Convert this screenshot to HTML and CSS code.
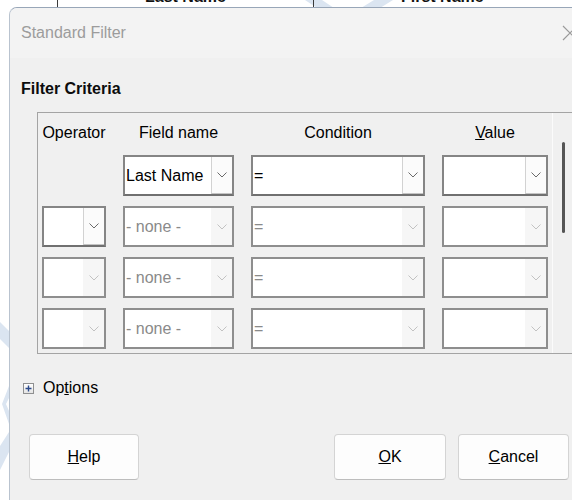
FILE: index.html
```html
<!DOCTYPE html>
<html lang="en">
<head>
<meta charset="utf-8">
<title>Standard Filter</title>
<link rel="stylesheet" href="styles.css">
</head>
<body>
  <svg class="backdrop" width="572" height="500" viewBox="0 0 572 500" aria-hidden="true">
    <polygon points="305,0 322,0 334,8 317,8" />
    <polygon points="374,0 393,0 380,8 361,8" />
    <polygon points="0,322 9,331 9,348 0,339" />
    <polygon points="9,386 2,404 9,424 9,411 6,404 9,398" />
    <polygon points="9,432 0,446 0,470 9,452" />
  </svg>

  <div class="sheet">
    <div class="sheet-cell sheet-first"></div>
    <div class="sheet-cell sheet-wide"><span class="sheet-text">Last Name</span></div>
    <div class="sheet-cell sheet-wide"><span class="sheet-text">First Name</span></div>
  </div>

  <div class="dialog">
    <header class="titlebar">
      <span class="title">Standard Filter</span>
      <svg class="close" width="16" height="16" viewBox="0 0 16 16" aria-hidden="true">
        <path d="M1 1 L15 15 M15 1 L1 15" />
      </svg>
    </header>

    <main class="content">
      <h2 class="section-title">Filter Criteria</h2>

      <div class="criteria">
        <div class="grid">
          <div class="col-head">Operator</div>
          <div class="col-head">Field name</div>
          <div class="col-head">Condition</div>
          <div class="col-head"><u>V</u>alue</div>

          <div class="blank"></div>
          <div class="combo">
            <span class="combo-text">Last Name</span>
            <span class="combo-btn"><svg class="chev" width="10" height="6" viewBox="0 0 10 6"><path d="M0.5 0.5 L5 5 L9.5 0.5" /></svg></span>
          </div>
          <div class="combo">
            <span class="combo-text">=</span>
            <span class="combo-btn"><svg class="chev" width="10" height="6" viewBox="0 0 10 6"><path d="M0.5 0.5 L5 5 L9.5 0.5" /></svg></span>
          </div>
          <div class="combo">
            <span class="combo-text"></span>
            <span class="combo-btn"><svg class="chev" width="10" height="6" viewBox="0 0 10 6"><path d="M0.5 0.5 L5 5 L9.5 0.5" /></svg></span>
          </div>

          <div class="combo">
            <span class="combo-text"></span>
            <span class="combo-btn"><svg class="chev" width="10" height="6" viewBox="0 0 10 6"><path d="M0.5 0.5 L5 5 L9.5 0.5" /></svg></span>
          </div>
          <div class="combo is-disabled">
            <span class="combo-text">- none -</span>
            <span class="combo-btn"><svg class="chev" width="10" height="6" viewBox="0 0 10 6"><path d="M0.5 0.5 L5 5 L9.5 0.5" /></svg></span>
          </div>
          <div class="combo is-disabled">
            <span class="combo-text">=</span>
            <span class="combo-btn"><svg class="chev" width="10" height="6" viewBox="0 0 10 6"><path d="M0.5 0.5 L5 5 L9.5 0.5" /></svg></span>
          </div>
          <div class="combo is-disabled">
            <span class="combo-text"></span>
            <span class="combo-btn"><svg class="chev" width="10" height="6" viewBox="0 0 10 6"><path d="M0.5 0.5 L5 5 L9.5 0.5" /></svg></span>
          </div>

          <div class="combo is-disabled">
            <span class="combo-text"></span>
            <span class="combo-btn"><svg class="chev" width="10" height="6" viewBox="0 0 10 6"><path d="M0.5 0.5 L5 5 L9.5 0.5" /></svg></span>
          </div>
          <div class="combo is-disabled">
            <span class="combo-text">- none -</span>
            <span class="combo-btn"><svg class="chev" width="10" height="6" viewBox="0 0 10 6"><path d="M0.5 0.5 L5 5 L9.5 0.5" /></svg></span>
          </div>
          <div class="combo is-disabled">
            <span class="combo-text">=</span>
            <span class="combo-btn"><svg class="chev" width="10" height="6" viewBox="0 0 10 6"><path d="M0.5 0.5 L5 5 L9.5 0.5" /></svg></span>
          </div>
          <div class="combo is-disabled">
            <span class="combo-text"></span>
            <span class="combo-btn"><svg class="chev" width="10" height="6" viewBox="0 0 10 6"><path d="M0.5 0.5 L5 5 L9.5 0.5" /></svg></span>
          </div>

          <div class="combo is-disabled">
            <span class="combo-text"></span>
            <span class="combo-btn"><svg class="chev" width="10" height="6" viewBox="0 0 10 6"><path d="M0.5 0.5 L5 5 L9.5 0.5" /></svg></span>
          </div>
          <div class="combo is-disabled">
            <span class="combo-text">- none -</span>
            <span class="combo-btn"><svg class="chev" width="10" height="6" viewBox="0 0 10 6"><path d="M0.5 0.5 L5 5 L9.5 0.5" /></svg></span>
          </div>
          <div class="combo is-disabled">
            <span class="combo-text">=</span>
            <span class="combo-btn"><svg class="chev" width="10" height="6" viewBox="0 0 10 6"><path d="M0.5 0.5 L5 5 L9.5 0.5" /></svg></span>
          </div>
          <div class="combo is-disabled">
            <span class="combo-text"></span>
            <span class="combo-btn"><svg class="chev" width="10" height="6" viewBox="0 0 10 6"><path d="M0.5 0.5 L5 5 L9.5 0.5" /></svg></span>
          </div>
        </div>

        <div class="scroll">
          <div class="thumb"></div>
        </div>
      </div>

      <div class="options">
        <span class="expander">
          <svg width="9" height="9" viewBox="0 0 9 9" aria-hidden="true"><path d="M4.5 1.5 V7.5 M1.5 4.5 H7.5" /></svg>
        </span>
        <span>Op<u>t</u>ions</span>
      </div>

      <div class="buttons">
        <button class="btn btn-help" type="button"><u>H</u>elp</button>
        <button class="btn btn-ok" type="button"><u>O</u>K</button>
        <button class="btn btn-cancel" type="button"><u>C</u>ancel</button>
      </div>
    </main>
  </div>
</body>
</html>
```

FILE: styles.css
```css
* {
  box-sizing: border-box;
}

html,
body {
  margin: 0;
}

body {
  position: relative;
  width: 572px;
  height: 500px;
  overflow: hidden;
  background: #ffffff;
  font-family: "Liberation Sans", Arial, sans-serif;
  font-size: 16px;
  color: #000000;
}

/* pale shapes of the document behind the dialog */
.backdrop {
  position: absolute;
  left: 0;
  top: 0;
  z-index: 0;
}

.backdrop polygon {
  fill: #dbe5f1;
}

/* strip of spreadsheet visible above the dialog */
.sheet {
  position: relative;
  z-index: 1;
  display: flex;
  height: 7px;
  overflow: hidden;
}

.sheet-cell {
  height: 7px;
}

.sheet-first {
  width: 57px;
}

.sheet-wide {
  width: 256px;
  border-left: 1px solid #3a3a3a;
  padding-left: 87px;
}

.sheet-text {
  display: block;
  margin-top: -11px;
  font-weight: bold;
  font-size: 16px;
  line-height: 16px;
  color: #111111;
  white-space: nowrap;
}

/* dialog window */
.dialog {
  position: relative;
  z-index: 1;
  margin-left: 9px;
  width: 580px;
  height: 493px;
  background: #f0f0f0;
  border-top: 1px solid #98a6b8;
  border-left: 1px solid #b9c3cf;
  border-top-left-radius: 8px;
  overflow: hidden;
}

.titlebar {
  display: flex;
  align-items: center;
  height: 50px;
  padding: 0 11px 0 11px;
  background: #f3f3f3;
}

.title {
  color: #9c9c9c;
  font-size: 16px;
}

.close {
  margin-left: auto;
}

.close path {
  stroke: #9a9a9a;
  stroke-width: 1.2;
  fill: none;
}

.content {
  padding: 21px 11px 0;
}

.section-title {
  margin: 0;
  font-size: 16px;
  font-weight: bold;
  line-height: 20px;
  color: #0c0c0c;
}

/* criteria frame with its scroll area */
.criteria {
  display: flex;
  width: 560px;
  margin: 13px 0 0 16px;
  border: 1px solid #a4a4a4;
  border-right: none;
}

.grid {
  display: grid;
  grid-template-columns: 64px 111px 174px 106px;
  grid-template-rows: 32px repeat(4, 41px);
  column-gap: 17px;
  row-gap: 10px;
  padding: 0 4px 4px 4px;
  border-right: 1px solid #fbfbfb;
}

.col-head {
  padding-top: 10px;
  line-height: 20px;
  text-align: center;
  white-space: nowrap;
}

.combo {
  display: flex;
  height: 41px;
  background: #ffffff;
  border: 2px solid #858585;
  border-bottom-color: #707070;
}

.combo-text {
  flex: 1;
  padding-left: 1px;
  line-height: 37px;
  white-space: nowrap;
  overflow: hidden;
}

.combo-btn {
  display: flex;
  align-items: center;
  justify-content: center;
  width: 21px;
  background: #fbfbfb;
  border-left: 1px solid #d2d2d2;
  border-bottom: 1px solid #c4c4c4;
}

.chev path {
  fill: none;
  stroke: #6a6a6a;
  stroke-width: 1;
}

.combo.is-disabled {
  border-color: #8e8e8e;
}

.combo.is-disabled .combo-text {
  color: #8a8a8a;
}

.combo.is-disabled .combo-btn {
  background: #f6f6f6;
  border: none;
}

.combo.is-disabled .chev path {
  stroke: #c2c2c2;
}

.scroll {
  flex: 1;
  padding: 29px 0 0 9px;
}

.thumb {
  width: 3px;
  height: 91px;
  background: #555555;
  border-radius: 2px;
}

/* expander row */
.options {
  display: flex;
  align-items: center;
  gap: 9px;
  margin: 24px 0 0 2px;
  line-height: 20px;
}

.expander {
  display: flex;
  align-items: center;
  justify-content: center;
  width: 11px;
  height: 11px;
  border: 1px solid #8f9091;
  background: linear-gradient(#ffffff, #e4e4e4);
}

.expander path {
  stroke: #2b4a8c;
  stroke-width: 1.4;
  fill: none;
}

/* dialog buttons */
.buttons {
  display: flex;
  gap: 12px;
  width: 540px;
  margin: 36px 0 0 8px;
}

.btn {
  height: 46px;
  padding: 0;
  font-family: inherit;
  font-size: 16px;
  color: #000000;
  background: #fdfdfd;
  border: 1px solid #d4d4d4;
  border-bottom-color: #bdbdbd;
  border-radius: 4px;
}

.btn-help {
  width: 110px;
}

.btn-ok {
  width: 112px;
  margin-left: auto;
}

.btn-cancel {
  width: 111px;
}
```
